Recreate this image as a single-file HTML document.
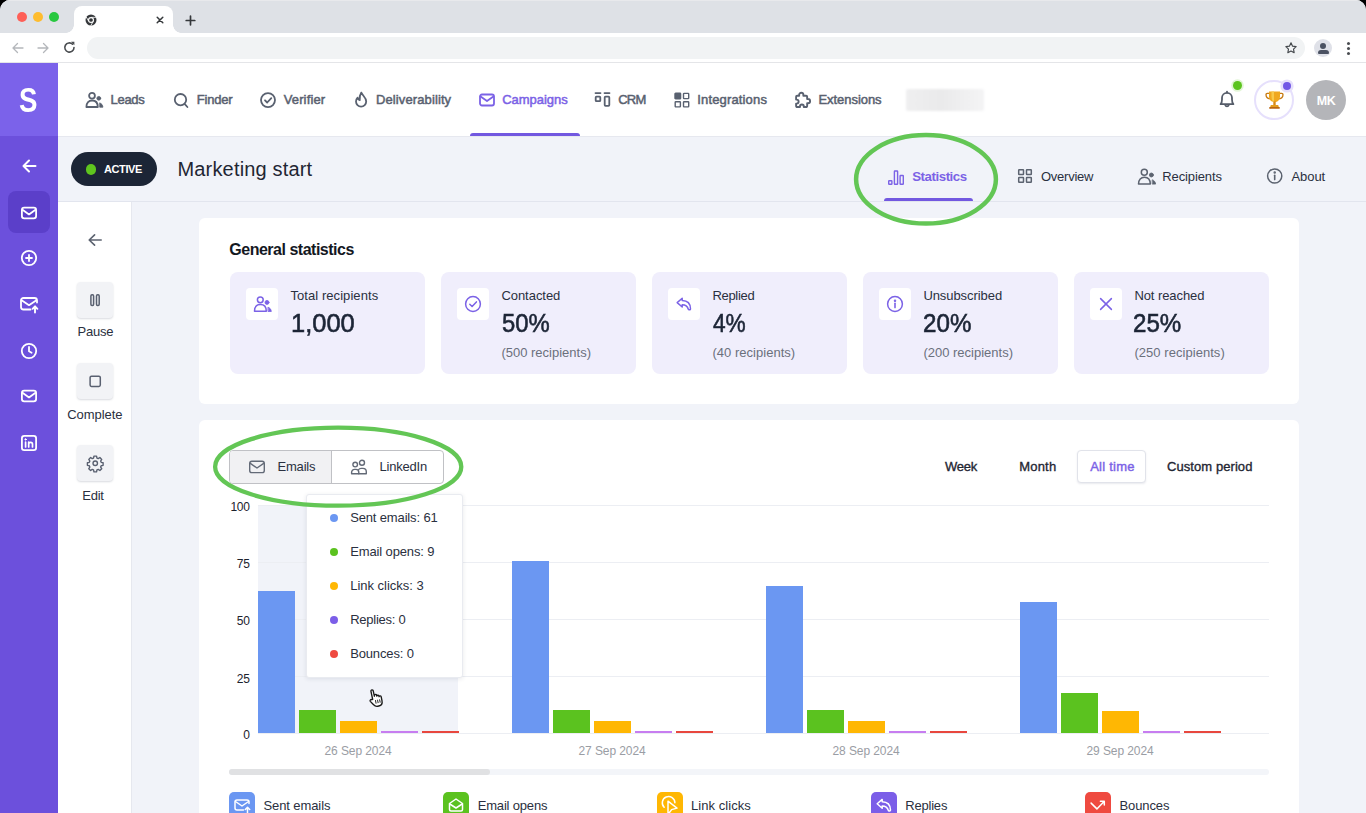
<!DOCTYPE html>
<html lang="en">
<head>
<meta charset="utf-8">
<title>Marketing start - Statistics</title>
<style>
*{box-sizing:border-box;margin:0;padding:0}
html,body{width:1366px;height:813px;overflow:hidden;background:#000}
body{font-family:"Liberation Sans",sans-serif;color:#1f2633;position:relative}
.abs{position:absolute}
.t{position:absolute;white-space:nowrap;line-height:1}
#win{position:absolute;left:0;top:0;width:1366px;height:813px;background:#f1f3f9;border-radius:10px 10px 0 0;overflow:hidden}
/* ---------- browser chrome ---------- */
#tabstrip{position:absolute;left:0;top:0;width:1366px;height:33px;background:#dee1e6}
.light{position:absolute;top:12px;width:10px;height:10px;border-radius:50%}
#tab{position:absolute;left:74px;top:6px;width:99px;height:27px;background:#fff;border-radius:8px 8px 0 0}
#tab:before,#tab:after{content:"";position:absolute;bottom:0;width:8px;height:8px;background:radial-gradient(circle at 0 0,transparent 7.5px,#fff 8px)}
#tab:before{left:-8px}
#tab:after{right:-8px;transform:scaleX(-1)}
#toolbar{position:absolute;left:0;top:33px;width:1366px;height:30px;background:#fff;border-bottom:1px solid #e4e5e8}
#url{position:absolute;left:87px;top:4px;width:1218px;height:22px;border-radius:11px;background:#f1f3f4}
/* ---------- app ---------- */
#side{position:absolute;left:0;top:63px;width:58px;height:750px;background:#6c50dc}
#logo{position:absolute;left:0;top:0;width:58px;height:73px;background:#7b62ea}
#side .act{position:absolute;left:8px;top:128px;width:42px;height:42px;border-radius:8px;background:#5b3fc9}
#side svg{position:absolute;left:18px;width:22px;height:22px;fill:none;stroke:#fff;stroke-width:1.8;stroke-linecap:round;stroke-linejoin:round}
#nav{position:absolute;left:58px;top:63px;width:1308px;height:74px;background:#fff;border-bottom:1px solid #e6e8ef}
#nav .t{font-size:13px;color:#596170;top:30px;-webkit-text-stroke:.5px #596170}
#nav svg.i{position:absolute;fill:none;stroke:#596170;stroke-width:1.8;stroke-linecap:round;stroke-linejoin:round}
#titlebar{position:absolute;left:58px;top:137px;width:1308px;height:65px;background:#f1f3f9;border-bottom:1px solid #e2e5ee}
#titlebar .t{font-size:13px;color:#2a3040;top:33px}
#titlebar svg.i{position:absolute;fill:none;stroke:#5c6370;stroke-width:1.5;stroke-linecap:round;stroke-linejoin:round}
#pill{position:absolute;left:13px;top:15px;width:86px;height:34px;border-radius:17px;background:#1c2536}
#inner{position:absolute;left:58px;top:202px;width:74px;height:611px;background:#fff;border-right:1px solid #e6e8ef}
.ibtn{position:absolute;left:19px;width:36px;height:36px;border-radius:4px;background:#f2f3f6;box-shadow:0 1px 2px rgba(40,50,80,.18)}
.ibtn svg{position:absolute;left:9px;top:9px;width:18px;height:18px;fill:none;stroke:#596070;stroke-width:1.5;stroke-linecap:round;stroke-linejoin:round}
#inner .t{font-size:13px;color:#2a3040}
/* ---------- cards ---------- */
.card{position:absolute;left:199px;width:1100px;background:#fff;border-radius:6px}
.stat{position:absolute;top:54px;width:195px;height:102px;border-radius:8px;background:#f0eefc}
.stat .ib{position:absolute;left:16px;top:16px;width:32px;height:32px;border-radius:4px;background:#fff}
.stat .ib svg{position:absolute;left:7px;top:7px;width:18px;height:18px;fill:none;stroke:#7b62e6;stroke-width:1.5;stroke-linecap:round;stroke-linejoin:round}
.stat .l{left:60.4px;top:17px;font-size:13px;color:#2a3040}
.stat .v{left:60.8px;top:38px;font-size:26.5px;transform-origin:0 0;color:#1c2536;-webkit-text-stroke:.6px #1c2536}
.stat .s{left:60.4px;top:74.3px;font-size:13px;color:#6b707c}
/* ---------- chart ---------- */
.per{top:40.200px;font-size:13px;color:#1f2633;-webkit-text-stroke:.35px #1f2633}
#chart{position:absolute;left:0;top:0;width:1100px;height:345px}
#chart .band{position:absolute;left:59px;top:85.400px;width:200.400px;height:227.900px;background:#f1f3f9}
#chart .g{position:absolute;left:59.200px;width:1010.400px;height:1px;background:#eceef3}
#chart .yl{right:1049.200px;font-size:12px;color:#1c222d;letter-spacing:-.2px}
#chart .xl{top:324.700px;font-size:12px;color:#9a9da4;letter-spacing:-.09px}
#chart .b{position:absolute;width:36.700px;bottom:31.700px}
.b1{background:#6b97f2}.b2{background:#5bc21f}.b3{background:#ffb703}.b4{background:#c77df0}.b5{background:#e8473e}
.lg{position:absolute;top:372.200px;width:26px;height:26px;border-radius:5px}
.lg svg{position:absolute;left:2px;top:2px;width:22px;height:22px;fill:none;stroke:#fff;stroke-width:1.500;stroke-linecap:round;stroke-linejoin:round}
.lt{top:378.900px;font-size:13px;color:#2a3040}
#tip{position:absolute;left:106.800px;top:74px;width:157.700px;height:184px;background:#fff;border:1px solid #e9ebf0;border-radius:3px;box-shadow:0 1px 4px rgba(30,40,70,.10)}
#tip i{position:absolute;left:23.500px;width:8px;height:8px;border-radius:50%}
#tip .t{left:43.400px;font-size:13px;color:#2a3040}
</style>
</head>
<body>
<div id="win">

<!-- ================= BROWSER CHROME ================= -->
<div id="tabstrip">
  <div class="abs" style="left:0;top:0;width:1366px;height:1px;background:#e8e9ec"></div>
  <div class="light" style="left:17px;background:#fe5f57"></div>
  <div class="light" style="left:33px;background:#febc2e"></div>
  <div class="light" style="left:49px;background:#28c840"></div>
  <div id="tab">
    <svg class="abs" style="left:10.500px;top:8px" width="12" height="12" viewBox="0 0 24 24"><circle cx="12" cy="12" r="11" fill="#35383b"/><circle cx="12" cy="12" r="6" fill="#fff"/><circle cx="12" cy="12" r="3.700" fill="#35383b"/><g stroke="#fff" stroke-width="1.500" fill="none"><path d="M12 6.700H22"/><path d="M12 6.700H22" transform="rotate(120 12 12)"/><path d="M12 6.700H22" transform="rotate(240 12 12)"/></g></svg>
    <svg class="abs" style="left:82px;top:10px" width="8" height="8" viewBox="0 0 8 8"><path d="M1.200 1.200L6.800 6.800M6.800 1.200L1.200 6.800" stroke="#35383b" stroke-width="1.500" stroke-linecap="round"/></svg>
  </div>
  <svg class="abs" style="left:185px;top:14.500px" width="11" height="11" viewBox="0 0 11 11"><path d="M5.500 1.200V9.800M1.200 5.500H9.800" stroke="#35383b" stroke-width="1.700" stroke-linecap="round"/></svg>
</div>
<div id="toolbar">
  <svg class="abs" style="left:12px;top:9px" width="12" height="12" viewBox="0 0 12 12"><path d="M11 6H1.5M5.5 1.5L1 6L5.5 10.5" stroke="#b4b7bb" stroke-width="1.3" fill="none" stroke-linecap="round" stroke-linejoin="round"/></svg>
  <svg class="abs" style="left:37px;top:9px" width="12" height="12" viewBox="0 0 12 12"><path d="M1 6H10.5M6.5 1.5L11 6L6.5 10.5" stroke="#b4b7bb" stroke-width="1.3" fill="none" stroke-linecap="round" stroke-linejoin="round"/></svg>
  <svg class="abs" style="left:63px;top:8px" width="13" height="13" viewBox="0 0 13 13"><path d="M11 6.500A4.600 4.600 0 1 1 9.600 3.200" stroke="#4a4d51" stroke-width="1.600" fill="none" stroke-linecap="round"/><path d="M8 .8H11.4V4.2Z" fill="#4a4d51"/></svg>
  <div id="url"></div>
  <svg class="abs" style="left:1284px;top:8px" width="14" height="14" viewBox="0 0 24 24"><path d="M12 3.2l2.7 5.6 6.1.8-4.5 4.3 1.1 6.1L12 17.1 6.6 20l1.1-6.1L3.2 9.6l6.1-.8z" stroke="#45494d" stroke-width="2" fill="none" stroke-linejoin="round"/></svg>
  <div class="abs" style="left:1314px;top:6px;width:18px;height:18px;border-radius:50%;background:#dfe1e8;overflow:hidden">
    <div class="abs" style="left:6px;top:4px;width:6px;height:6px;border-radius:50%;background:#4b5262"></div>
    <div class="abs" style="left:3.5px;top:10.5px;width:11px;height:4.5px;border-radius:3px 3px 1px 1px;background:#4b5262"></div>
  </div>
  <div class="abs" style="left:1347px;top:9px;width:3px;height:3px;border-radius:50%;background:#4a4d51;box-shadow:0 5px 0 #4a4d51,0 10px 0 #4a4d51"></div>
</div>

<!-- ================= APP SIDEBAR ================= -->
<div id="side">
  <div id="logo"><span class="t" style="left:18.9px;top:18.9px;font-size:35px;font-weight:700;color:#fff;transform:scaleX(.79);transform-origin:0 0">S</span></div>
  <div class="act"></div>
  <svg style="top:92px" viewBox="0 0 22 22"><path d="M17.5 11H5.5M11 5.5L5.5 11L11 16.5" stroke-width="2"/></svg>
  <svg style="top:138.5px" viewBox="0 0 22 22"><rect x="3.900" y="5.700" width="14.200" height="10.600" rx="2.300"/><path d="M4.500 7.800L11 12.400L17.500 7.800"/></svg>
  <svg style="top:184px" viewBox="0 0 22 22"><circle cx="11" cy="11" r="7.2"/><path d="M11 8V14M8 11H14"/></svg>
  <svg style="top:230px" viewBox="0 0 22 22"><path d="M19 9.5V7.5A2.5 2.5 0 0 0 16.500 5H5.500A2.500 2.500 0 0 0 3 7.500V14A2.500 2.500 0 0 0 5.500 16.500H12.500"/><path d="M3.600 7.200L11 12.200L18.400 7.200"/><path d="M17 19.500V13.500M14.600 15.800L17 13.300L19.400 15.800" stroke-width="1.900"/></svg>
  <svg style="top:276.500px" viewBox="0 0 22 22"><circle cx="11" cy="11" r="7.200"/><path d="M11 7V11.300L13.600 12.800"/></svg>
  <svg style="top:322px" viewBox="0 0 22 22"><rect x="3.900" y="5.700" width="14.200" height="10.600" rx="2.300"/><path d="M4.500 7.800L11 12.400L17.500 7.800"/></svg>
  <svg style="top:368.500px" viewBox="0 0 22 22"><rect x="3.900" y="3.900" width="14.200" height="14.200" rx="2.400"/><path d="M7.600 10.200V15M10.700 15V10.200M10.700 12.300A1.900 1.900 0 0 1 14.500 12.300V15" stroke-width="1.700"/><circle cx="7.600" cy="7.400" r=".7" fill="#fff" stroke-width="1"/></svg>
</div>

<!-- ================= TOP NAV ================= -->
<div id="nav">
  <!-- Leads -->
  <svg class="i" style="left:27px;top:28px" width="19" height="18" viewBox="0 0 19 18"><circle cx="7" cy="4.700" r="2.900"/><path d="M1.400 16C1.400 11.800 3.800 9.500 7.100 9.500C10.400 9.500 12.800 11.800 12.800 16Z"/><circle cx="13.800" cy="7.300" r="1.900" fill="#596170" stroke-width=".8"/><path d="M15 12C16.700 12.600 17.800 14.200 17.900 16.200H15Z" fill="#596170" stroke-width=".8"/></svg>
  <span class="t" style="left:52.5px;letter-spacing:-.28px">Leads</span>
  <!-- Finder -->
  <svg class="i" style="left:115px;top:29px" width="17" height="17" viewBox="0 0 17 17"><circle cx="7.500" cy="7.700" r="5.700"/><path d="M11.800 12.200L14.400 15"/></svg>
  <span class="t" style="left:138.800px;letter-spacing:-.19px">Finder</span>
  <!-- Verifier -->
  <svg class="i" style="left:201px;top:28px" width="18" height="18" viewBox="0 0 18 18"><circle cx="9" cy="9.100" r="7"/><path d="M6 9.300L8.200 11.500L12.300 7.100"/></svg>
  <span class="t" style="left:225.700px;letter-spacing:.14px">Verifier</span>
  <!-- Deliverability -->
  <svg class="i" style="left:295px;top:28px" width="16" height="18" viewBox="0 0 16 18"><path d="M8.300 1.600C9.300 4.300 13.200 6.300 13.200 10.600A5.100 5.100 0 0 1 3 10.600C3 8.800 3.800 7.500 4.600 6.700C5 8.300 5.900 9 6.700 9.200C6.500 6.400 7 3.400 8.300 1.600Z"/></svg>
  <span class="t" style="left:318px;letter-spacing:.11px">Deliverability</span>
  <!-- Campaigns (active) -->
  <svg class="i" style="left:420px;top:29px;stroke:#7b62e6" width="18" height="16" viewBox="0 0 18 16"><rect x="2" y="2.500" width="14" height="11" rx="2"/><path d="M2.600 4.500L9 9L15.400 4.500"/></svg>
  <span class="t" style="left:444.200px;letter-spacing:-.03px;color:#7b62e6;-webkit-text-stroke:.5px #7b62e6">Campaigns</span>
  <div class="abs" style="left:412px;top:70px;width:110px;height:3.200px;border-radius:3px 3px 0 0;background:#7258e0"></div>
  <!-- CRM -->
  <svg class="i" style="left:535px;top:28px" width="19" height="17" viewBox="0 0 19 17"><path d="M2.500 2.100H7.500M11.500 2.100H16.500"/><rect x="2.700" y="5.600" width="4.600" height="4.600" rx=".8"/><rect x="11.700" y="5.600" width="4.600" height="9.200" rx=".8"/></svg>
  <span class="t" style="left:560.200px;letter-spacing:-.74px">CRM</span>
  <!-- Integrations -->
  <svg class="i" style="left:616px;top:29px;stroke-width:1.400" width="16" height="16" viewBox="0 0 16 16"><rect x="1" y="1.200" width="5.600" height="5.600" rx=".6" fill="#596170"/><rect x="9.500" y="1.400" width="5.200" height="5.200" rx=".6"/><rect x="1.200" y="9.700" width="5.200" height="5.200" rx=".6"/><rect x="9.500" y="9.700" width="5.200" height="5.200" rx=".6"/></svg>
  <span class="t" style="left:639.300px;letter-spacing:.15px">Integrations</span>
  <!-- Extensions -->
  <svg class="i" style="left:733.500px;top:27px" width="20" height="20" viewBox="0 0 19 19"><path d="M6.800 4.600A2 2 0 0 1 10.800 4.600V5.400H13.400A1 1 0 0 1 14.400 6.400V8.600H15.200A2 2 0 0 1 15.200 12.600H14.400V15.200A1 1 0 0 1 13.400 16.200H11.200V15.600A1.800 1.800 0 0 0 7.600 15.600V16.200H4.900A1 1 0 0 1 3.900 15.200V12.900H4.400A1.900 1.900 0 0 0 4.400 9.100H3.900V6.400A1 1 0 0 1 4.900 5.400H6.800Z"/></svg>
  <span class="t" style="left:760.500px;letter-spacing:-.06px">Extensions</span>
  <!-- blurred item -->
  <div class="abs" style="left:847.500px;top:25.500px;width:78px;height:22.500px;border-radius:2px;background:linear-gradient(90deg,#efeff0,#eaeaeb 45%,#f4f4f5);filter:blur(1.200px)"></div>
  <!-- bell -->
  <svg class="i" style="left:1160px;top:26px;stroke:#555c69;stroke-width:1.800" width="18" height="21" viewBox="0 0 18 21"><path d="M2.600 15.200C3.800 14 4 12.800 4 10.600V8.800A5 5 0 0 1 14 8.800V10.600C14 12.800 14.200 14 15.400 15.200Z"/><path d="M7.200 16A1.900 1.900 0 0 0 10.800 16"/><path d="M9 3.600V2.600"/></svg>
  <div class="abs" style="left:1174.700px;top:18.200px;width:9.200px;height:9.200px;border-radius:50%;background:#5cc41f;box-shadow:0 0 0 1.800px #e2f5d6"></div>
  <!-- trophy -->
  <div class="abs" style="left:1196px;top:17px;width:40px;height:40px;border-radius:50%;border:2px solid #e6e0fc;background:#fff"></div>
  <svg class="abs" style="left:1206.500px;top:27px" width="19" height="20" viewBox="0 0 19 20"><path d="M4.300 3.400H2.200C1.400 3.400 1 3.800 1 4.500C1 6.900 2.500 8.600 4.900 8.900M14.700 3.400H16.800C17.600 3.400 18 3.800 18 4.500C18 6.900 16.500 8.600 14.100 8.900" fill="none" stroke="#c77a12" stroke-width="1.300"/><path d="M4 1.400H15V6.200C15 9.800 12.700 12 9.500 12C6.300 12 4 9.800 4 6.200Z" fill="#f0a81e"/><path d="M6.500 1.400H9V11.900C7.600 11.500 6.500 9.800 6.500 6.200Z" fill="#f8c94a"/><path d="M8.300 11.500H10.700V15H8.300Z" fill="#d78a17"/><path d="M5.800 15H13.200L13.800 17H5.200Z" fill="#e39b1c"/><path d="M4.300 17H14.700V18.800H4.300Z" fill="#b9650f"/></svg>
  <div class="abs" style="left:1224.900px;top:18.600px;width:8.400px;height:8.400px;border-radius:50%;background:#7258e6;box-shadow:0 0 0 2.600px #e6e0fb"></div>
  <!-- avatar -->
  <div class="abs" style="left:1248px;top:17px;width:40px;height:40px;border-radius:50%;background:#b4b5b9"></div>
  <span class="t" style="left:1258.800px;top:31.500px;font-size:12.500px;font-weight:700;color:#fff;letter-spacing:-.5px;-webkit-text-stroke:0">MK</span>
</div>

<!-- ================= TITLE BAR ================= -->
<div id="titlebar">
  <div id="pill">
    <div class="abs" style="left:14.500px;top:12px;width:10.500px;height:10.500px;border-radius:50%;background:#5fc51e"></div>
    <span class="t" style="left:33px;top:12px;font-size:11px;font-weight:700;color:#fff;letter-spacing:-.41px">ACTIVE</span>
  </div>
  <span class="t" style="left:119.500px;top:21.700px;font-size:20px;color:#1f2633;letter-spacing:.17px">Marketing start</span>
  <!-- Statistics (active) -->
  <svg class="i" style="left:829px;top:31.500px;stroke:#7b62e6;stroke-width:1.400" width="18" height="17" viewBox="0 0 18 17"><rect x="1.700" y="11.700" width="3.200" height="3.600" rx=".5"/><rect x="7.400" y="2" width="3.200" height="13.300" rx=".5"/><rect x="13.100" y="6.500" width="3.200" height="8.800" rx=".5"/></svg>
  <span class="t" style="left:854.200px;top:33px;font-size:13.300px;font-weight:700;color:#7b62e6;letter-spacing:-.46px">Statistics</span>
  <div class="abs" style="left:826px;top:60.700px;width:89px;height:3.500px;border-radius:3px 3px 0 0;background:#7258e0"></div>
  <!-- Overview -->
  <svg class="i" style="left:959px;top:31.300px" width="16" height="16" viewBox="0 0 16 16"><rect x="1.700" y="1.700" width="4.800" height="4.800" rx=".5"/><rect x="9.500" y="1.700" width="4.800" height="4.800" rx=".5"/><rect x="1.700" y="9.500" width="4.800" height="4.800" rx=".5"/><rect x="9.500" y="9.500" width="4.800" height="4.800" rx=".5"/></svg>
  <span class="t" style="left:983px;letter-spacing:-.25px">Overview</span>
  <!-- Recipients -->
  <svg class="i" style="left:1078.500px;top:30px" width="20" height="19" viewBox="0 0 20 19"><circle cx="7.300" cy="5.200" r="3"/><path d="M1.500 17C1.500 12.600 4 10.200 7.400 10.200C10.800 10.200 13.300 12.600 13.300 17Z"/><circle cx="14.400" cy="8" r="2" fill="#5c6370" stroke-width=".8"/><path d="M15.600 12.900C17.300 13.500 18.500 15.100 18.600 17.100H15.600Z" fill="#5c6370" stroke-width=".8"/></svg>
  <span class="t" style="left:1104.300px;letter-spacing:-.12px">Recipients</span>
  <!-- About -->
  <svg class="i" style="left:1208px;top:30.100px" width="18" height="18" viewBox="0 0 18 18"><circle cx="8.700" cy="9" r="7.100"/><path d="M8.700 8.200V12.600" stroke-width="1.600"/><circle cx="8.700" cy="5.600" r=".5" fill="#5c6370"/></svg>
  <span class="t" style="left:1233.500px;letter-spacing:-.08px">About</span>
</div>

<!-- ================= INNER SIDEBAR ================= -->
<div id="inner">
  <svg class="abs" style="left:28px;top:29px" width="18" height="18" viewBox="0 0 18 18"><path d="M15.200 9H3.400M8.600 3.800L3.200 9L8.600 14.200" stroke="#5c6370" stroke-width="1.600" fill="none" stroke-linecap="round" stroke-linejoin="round"/></svg>
  <div class="ibtn" style="top:79.500px"><svg viewBox="0 0 18 18"><rect x="4.900" y="3.800" width="2.700" height="10.600" rx="1.100"/><rect x="10.500" y="3.800" width="2.700" height="10.600" rx="1.100"/></svg></div>
  <span class="t" style="left:19.500px;top:123.400px;letter-spacing:-.22px">Pause</span>
  <div class="ibtn" style="top:161.300px"><svg viewBox="0 0 18 18"><rect x="4.100" y="4.200" width="10.200" height="10.200" rx="1.400"/></svg></div>
  <span class="t" style="left:9.200px;top:205.500px;letter-spacing:-.04px">Complete</span>
  <div class="ibtn" style="top:243.400px"><svg viewBox="0 0 24 24" style="left:8.700px;top:9px;width:18.500px;height:18.500px;stroke-width:1.800"><path d="M10.300 2.800h3.400l.5 2.500 1.700.7 2.100-1.400 2.400 2.400-1.400 2.100.7 1.700 2.500.5v3.400l-2.500.5-.7 1.700 1.400 2.100-2.400 2.400-2.100-1.400-1.700.7-.5 2.500h-3.400l-.5-2.500-1.700-.7-2.100 1.400-2.400-2.400 1.400-2.100-.7-1.700-2.500-.5v-3.400l2.500-.5.7-1.700-1.400-2.100 2.400-2.400 2.100 1.400 1.700-.7z" stroke-linejoin="round"/><circle cx="12" cy="12" r="2.900"/></svg></div>
  <span class="t" style="left:24.300px;top:287.400px;letter-spacing:-.25px">Edit</span>
</div>

<!-- ================= CARDS ================= -->
<div class="card" id="c1" style="top:218px;height:186px">
  <span class="t" style="left:30.300px;top:24.300px;font-size:16px;font-weight:700;color:#14181f;letter-spacing:-.49px">General statistics</span>
  <div class="stat" style="left:31px">
    <div class="ib"><svg viewBox="0 0 19 18" style="left:6.500px;width:19px"><circle cx="7.300" cy="4.800" r="2.900"/><path d="M1.500 16.300C1.500 12 4 9.600 7.400 9.600C10.800 9.600 13.300 12 13.300 16.300Z"/><circle cx="14" cy="7.400" r="2" fill="#7b62e6" stroke-width=".8"/><path d="M15.300 12.300C17 12.900 18.200 14.500 18.300 16.500H15.300Z" fill="#7b62e6" stroke-width=".8"/></svg></div>
    <span class="t l" style="letter-spacing:.07px">Total recipients</span>
    <span class="t v" style="left:60.500px;transform:scaleX(.962)">1,000</span>
  </div>
  <div class="stat" style="left:242px">
    <div class="ib"><svg viewBox="0 0 18 18"><circle cx="9" cy="9" r="7.400"/><path d="M5.800 9.200L8.100 11.500L12.400 6.900"/></svg></div>
    <span class="t l" style="letter-spacing:-.04px">Contacted</span>
    <span class="t v" style="transform:scaleX(.9)">50%</span>
    <span class="t s">(500 recipients)</span>
  </div>
  <div class="stat" style="left:453px">
    <div class="ib"><svg viewBox="0 0 18 18"><path d="M7.200 3.200L2.200 7.600L7.200 12V9.700C10.400 9.700 12.400 10.800 13.300 14.200C13.500 15.100 15.500 15 15.500 13.900C15.400 9 12.400 5.700 7.200 5.600Z"/></svg></div>
    <span class="t l" style="letter-spacing:-.31px">Replied</span>
    <span class="t v" style="transform:scaleX(.855)">4%</span>
    <span class="t s" style="letter-spacing:.03px">(40 recipients)</span>
  </div>
  <div class="stat" style="left:664px">
    <div class="ib"><svg viewBox="0 0 18 18"><circle cx="9" cy="9" r="7.400"/><path d="M9 8.300V12.600" stroke-width="1.600"/><circle cx="9" cy="5.700" r=".5" fill="#7b62e6"/></svg></div>
    <span class="t l" style="letter-spacing:-.07px">Unsubscribed</span>
    <span class="t v" style="left:59.600px;transform:scaleX(.912)">20%</span>
    <span class="t s">(200 recipients)</span>
  </div>
  <div class="stat" style="left:875px">
    <div class="ib"><svg viewBox="0 0 18 18"><path d="M3.600 3.600L14.400 14.400M14.400 3.600L3.600 14.400"/></svg></div>
    <span class="t l" style="letter-spacing:-.08px">Not reached</span>
    <span class="t v" style="left:59.400px;transform:scaleX(.91)">25%</span>
    <span class="t s" style="letter-spacing:.05px">(250 recipients)</span>
  </div>
</div>
<div class="card" id="c2" style="top:420px;height:400px">
  <!-- toggle -->
  <div class="abs" style="left:30px;top:30.300px;width:215px;height:33.300px;border:1px solid #c0c1c5;border-radius:4px;background:#fff;overflow:hidden">
    <div class="abs" style="left:0;top:0;width:101.500px;height:32px;background:#f1f1f3;border-right:1px solid #c0c1c5"></div>
  </div>
  <svg class="abs" style="left:49px;top:39px;fill:none;stroke:#636a77;stroke-width:1.400;stroke-linecap:round;stroke-linejoin:round" width="18" height="16" viewBox="0 0 18 16"><rect x="1.700" y="2.200" width="14.600" height="11.400" rx="2.200"/><path d="M2.300 4.400L9 9L15.700 4.400"/></svg>
  <span class="t" style="left:78.500px;top:40.300px;font-size:13px;color:#2a3040;letter-spacing:-.19px">Emails</span>
  <svg class="abs" style="left:151px;top:38.500px;fill:none;stroke:#636a77;stroke-width:1.400;stroke-linecap:round;stroke-linejoin:round" width="18" height="17" viewBox="0 0 18 17"><circle cx="5.200" cy="5.600" r="2.300"/><path d="M1.600 14.800V13.400A3 3 0 0 1 4.600 10.400H5.800A3 3 0 0 1 8.800 13.400V14.800Z"/><circle cx="12" cy="3.800" r="2.500"/><path d="M8.800 14.800H16.300V12.800A3.400 3.400 0 0 0 12.900 9.400H11.100A3.400 3.400 0 0 0 8.400 10.800"/></svg>
  <span class="t" style="left:180.400px;top:40.300px;font-size:13px;color:#2a3040;letter-spacing:-.18px">LinkedIn</span>
  <!-- period -->
  <span class="t per" style="left:746px;letter-spacing:-.25px">Week</span>
  <span class="t per" style="left:820.300px;letter-spacing:.17px">Month</span>
  <div class="abs" style="left:878.400px;top:30.300px;width:69px;height:33px;border:1px solid #e1e3ea;border-radius:4px;background:#fff;box-shadow:0 1px 2px rgba(40,50,90,.10)"></div>
  <span class="t per" style="left:891.200px;letter-spacing:.23px;color:#7b62e6;-webkit-text-stroke:.4px #7b62e6">All time</span>
  <span class="t per" style="left:968px;letter-spacing:.07px">Custom period</span>

  <!-- chart -->
  <div id="chart">
    <div class="band"></div>
    <div class="g" style="top:85px"></div><div class="g" style="top:142px"></div><div class="g" style="top:199px"></div><div class="g" style="top:256px"></div><div class="g" style="top:313px"></div>
    <span class="t yl" style="top:81.400px">100</span>
    <span class="t yl" style="top:138px">75</span>
    <span class="t yl" style="top:195.300px">50</span>
    <span class="t yl" style="top:252.700px">25</span>
    <span class="t yl" style="top:309.400px">0</span>
    <!-- group 1 -->
    <div class="b b1" style="left:59.200px;top:171.300px"></div><div class="b b2" style="left:100.250px;top:290.100px"></div><div class="b b3" style="left:141.300px;top:301.200px"></div><div class="b b4" style="left:182.350px;top:311.200px"></div><div class="b b5" style="left:223.400px;top:311.200px"></div>
    <!-- group 2 -->
    <div class="b b1" style="left:313.200px;top:141.400px"></div><div class="b b2" style="left:354.250px;top:290.100px"></div><div class="b b3" style="left:395.300px;top:301.200px"></div><div class="b b4" style="left:436.350px;top:311.200px"></div><div class="b b5" style="left:477.400px;top:311.200px"></div>
    <!-- group 3 -->
    <div class="b b1" style="left:567.200px;top:166.200px"></div><div class="b b2" style="left:608.250px;top:290.200px"></div><div class="b b3" style="left:649.300px;top:301.200px"></div><div class="b b4" style="left:690.350px;top:311.200px"></div><div class="b b5" style="left:731.400px;top:311.200px"></div>
    <!-- group 4 -->
    <div class="b b1" style="left:821.200px;top:182px"></div><div class="b b2" style="left:862.250px;top:273.400px"></div><div class="b b3" style="left:903.300px;top:291.200px"></div><div class="b b4" style="left:944.350px;top:311.200px"></div><div class="b b5" style="left:985.400px;top:311.200px"></div>
    <span class="t xl" style="left:125.500px">26 Sep 2024</span>
    <span class="t xl" style="left:379.500px">27 Sep 2024</span>
    <span class="t xl" style="left:633.500px">28 Sep 2024</span>
    <span class="t xl" style="left:887.500px">29 Sep 2024</span>
  </div>
  <!-- scrollbar -->
  <div class="abs" style="left:30px;top:349.300px;width:1039.600px;height:6.200px;border-radius:3px;background:#f3f5f9"></div>
  <div class="abs" style="left:30px;top:349.300px;width:261px;height:6.200px;border-radius:3px;background:#e0e1e3"></div>
  <!-- legend -->
  <div class="lg" style="left:30px;background:#6b97f2"><svg viewBox="0 0 22 22"><path d="M18 9.500V8A2 2 0 0 0 16 6H6A2 2 0 0 0 4 8V14A2 2 0 0 0 6 16H12.500"/><path d="M4.500 7.500L11 12L17.500 7.500"/><path d="M16.500 19V13.500M14.300 15.500L16.500 13.300L18.700 15.500"/></svg></div>
  <span class="t lt" style="left:64.500px;letter-spacing:-.10px">Sent emails</span>
  <div class="lg" style="left:244px;background:#5bc21f"><svg viewBox="0 0 22 22"><path d="M4.500 9.500L11 5L17.500 9.500V15.500A1.500 1.500 0 0 1 16 17H6A1.500 1.500 0 0 1 4.500 15.500Z"/><path d="M4.800 10L11 14L17.200 10"/></svg></div>
  <span class="t lt" style="left:278.700px;letter-spacing:-.18px">Email opens</span>
  <div class="lg" style="left:458px;background:#ffb703"><svg viewBox="0 0 22 22"><path d="M5.150 13.250A6.300 6.300 0 1 1 15.900 8.800"/><path d="M9 7.200V20.500L12.600 15.600L18 14.100Z"/></svg></div>
  <span class="t lt" style="left:492.100px;letter-spacing:.04px">Link clicks</span>
  <div class="lg" style="left:672px;background:#7b5ee8"><svg viewBox="0 0 22 22"><path transform="translate(2 2.200)" d="M7.200 3.200L2.200 7.600L7.200 12V9.700C10.400 9.700 12.400 10.800 13.300 14.200C13.500 15.100 15.500 15 15.500 13.900C15.400 9 12.400 5.700 7.200 5.600Z"/></svg></div>
  <span class="t lt" style="left:706.200px;letter-spacing:-.19px">Replies</span>
  <div class="lg" style="left:886px;background:#ef4a40"><svg viewBox="0 0 22 22"><path d="M4.100 9.100L9.900 14.900L17.300 7.200M13.400 7.200H17.300V11.100"/></svg></div>
  <span class="t lt" style="left:920.500px;letter-spacing:-.11px">Bounces</span>

  <!-- tooltip -->
  <div id="tip">
    <i style="top:18.800px;background:#6b97f2"></i><span class="t" style="top:16.300px;letter-spacing:-.15px">Sent emails: 61</span>
    <i style="top:52.700px;background:#5bc21f"></i><span class="t" style="top:50.200px;letter-spacing:-.13px">Email opens: 9</span>
    <i style="top:86.600px;background:#ffb703"></i><span class="t" style="top:84.100px;letter-spacing:-.01px">Link clicks: 3</span>
    <i style="top:120.500px;background:#7b5ee8"></i><span class="t" style="top:118px;letter-spacing:-.25px">Replies: 0</span>
    <i style="top:154.800px;background:#ef4a40"></i><span class="t" style="top:152.300px;letter-spacing:-.15px">Bounces: 0</span>
  </div>
  <!-- cursor -->
  <svg class="abs" style="left:167.500px;top:267.500px;transform:rotate(-12deg)" width="17" height="20" viewBox="0 0 14.200 19"><path d="M4.200 10.200V2.400A1.100 1.100 0 0 1 6.400 2.400V7.600L6.600 6.800A1.100 1.100 0 0 1 8.700 7.200V8A1.050 1.050 0 0 1 10.700 8.300V9A1 1 0 0 1 12.600 9.400V13.200C12.600 15.800 11.200 17.600 8.600 17.600H7.600C5.800 17.600 4.800 16.800 3.800 15.200L1.600 11.600A1.100 1.100 0 0 1 3.400 10.400Z" fill="#fff" stroke="#1a1a1a" stroke-width="1.300" stroke-linejoin="round"/><path d="M6.600 11.500V14.800M8.600 11.500V14.800M10.600 11.500V14.800" stroke="#1a1a1a" stroke-width=".9" fill="none"/></svg>
</div>

<!-- ================= ANNOTATION ELLIPSES ================= -->
<svg class="abs" style="left:0;top:0;pointer-events:none" width="1366" height="813" viewBox="0 0 1366 813"><ellipse cx="926" cy="179.300" rx="69.900" ry="44.200" fill="none" stroke="#63c655" stroke-width="4.500"/><ellipse cx="338.200" cy="466.700" rx="123.100" ry="39" fill="none" stroke="#63c655" stroke-width="4.300"/></svg>

</div>
</body>
</html>
